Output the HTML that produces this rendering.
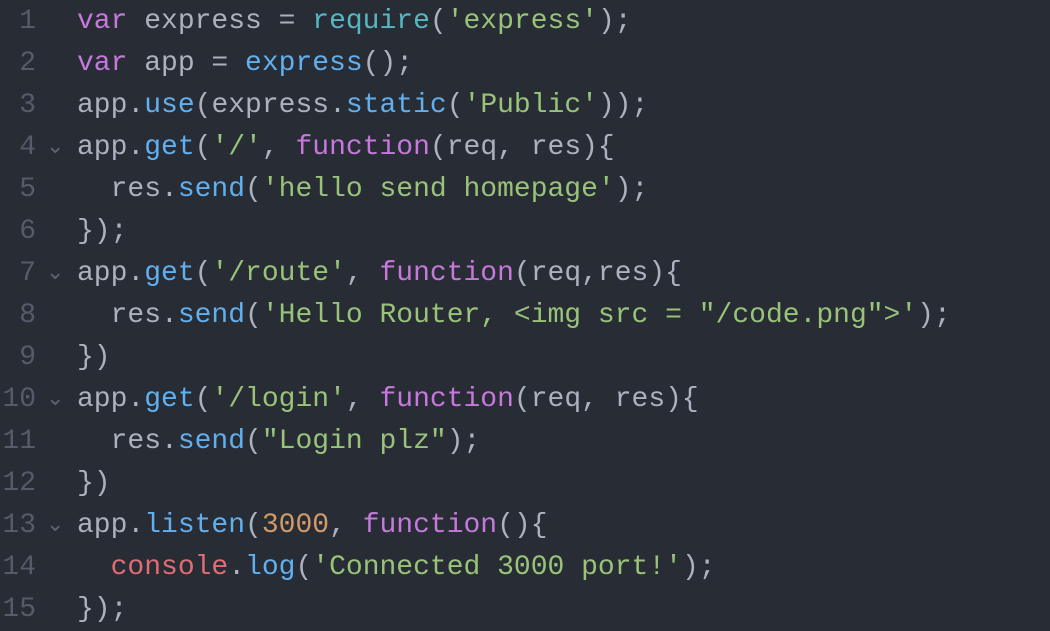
<!DOCTYPE html><html><head><style>
body{margin:0;background:#282c34;width:1050px;height:626px;overflow:hidden}
.c{position:absolute;left:0;top:1px;font:28px/42px "Liberation Mono",monospace;color:#abb2bf}
.l{position:relative;height:42px;white-space:pre}
.n{position:absolute;left:0;width:36px;text-align:right;color:#545b69}
.f{position:absolute;left:46px;top:0;color:#5c6370;font-size:22px}
.t{position:absolute;left:77px}
.k{color:#c678dd}.b{color:#61afef}.s{color:#98c379}.q{color:#56b6c2}.o{color:#d19a66}.r{color:#e06c75}
</style></head><body><div class="c"><div class="l"><span class="n">1</span><span class="t"><span class="k">var</span> express = <span class="q">require</span>(<span class="s">'express'</span>);</span></div><div class="l"><span class="n">2</span><span class="t"><span class="k">var</span> app = <span class="b">express</span>();</span></div><div class="l"><span class="n">3</span><span class="t">app.<span class="b">use</span>(express.<span class="b">static</span>(<span class="s">'Public'</span>));</span></div><div class="l"><span class="n">4</span><span class="f">⌄</span><span class="t">app.<span class="b">get</span>(<span class="s">'/'</span>, <span class="k">function</span>(req, res){</span></div><div class="l"><span class="n">5</span><span class="t">  res.<span class="b">send</span>(<span class="s">'hello send homepage'</span>);</span></div><div class="l"><span class="n">6</span><span class="t">});</span></div><div class="l"><span class="n">7</span><span class="f">⌄</span><span class="t">app.<span class="b">get</span>(<span class="s">'/route'</span>, <span class="k">function</span>(req,res){</span></div><div class="l"><span class="n">8</span><span class="t">  res.<span class="b">send</span>(<span class="s">'Hello Router, &lt;img src = "/code.png"&gt;'</span>);</span></div><div class="l"><span class="n">9</span><span class="t">})</span></div><div class="l"><span class="n">10</span><span class="f">⌄</span><span class="t">app.<span class="b">get</span>(<span class="s">'/login'</span>, <span class="k">function</span>(req, res){</span></div><div class="l"><span class="n">11</span><span class="t">  res.<span class="b">send</span>(<span class="s">"Login plz"</span>);</span></div><div class="l"><span class="n">12</span><span class="t">})</span></div><div class="l"><span class="n">13</span><span class="f">⌄</span><span class="t">app.<span class="b">listen</span>(<span class="o">3000</span>, <span class="k">function</span>(){</span></div><div class="l"><span class="n">14</span><span class="t">  <span class="r">console</span>.<span class="b">log</span>(<span class="s">'Connected 3000 port!'</span>);</span></div><div class="l"><span class="n">15</span><span class="t">});</span></div></div></body></html>
